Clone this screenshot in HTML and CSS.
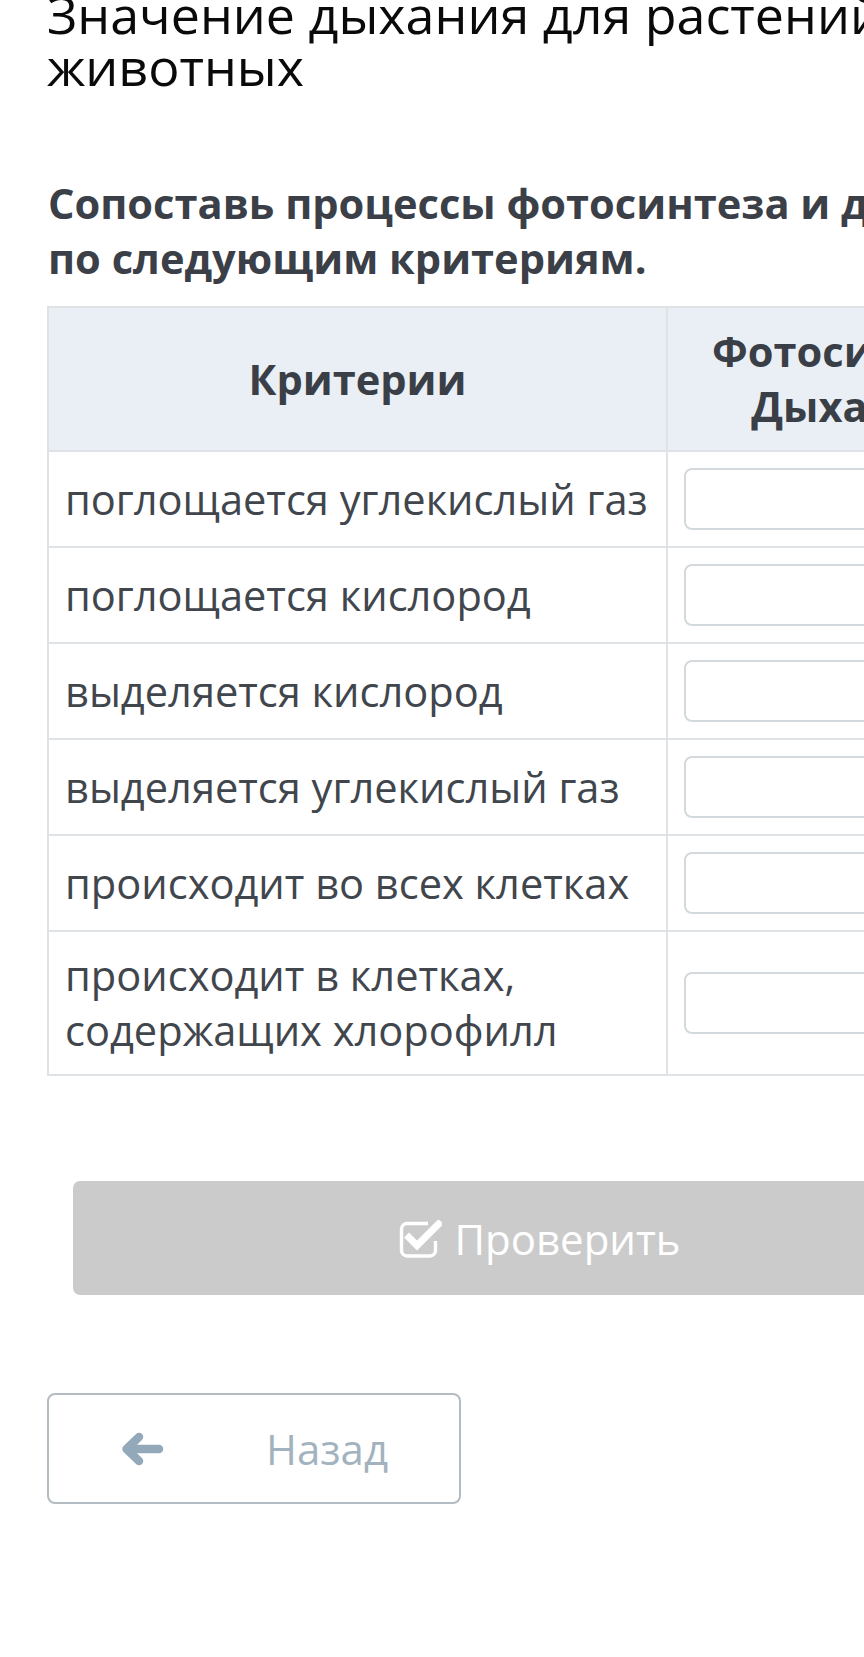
FILE: index.html
```html
<!DOCTYPE html>
<html lang="ru">
<head>
<meta charset="utf-8">
<title>Значение дыхания для растений и животных</title>
<link rel="stylesheet" href="styles.css">
</head>
<body>
<div class="page">
  <h1 class="title">Значение дыхания для растений и животных</h1>
  <h2 class="task">Сопоставь процессы фотосинтеза и дыхания<br>по следующим критериям.</h2>
  <table class="match">
    <colgroup><col class="c1"><col class="c2"></colgroup>
    <thead>
      <tr><th>Критерии</th><th>Фотосинтез/ Дыхание</th></tr>
    </thead>
    <tbody>
      <tr><td>поглощается углекислый газ</td><td><div class="select"></div></td></tr>
      <tr><td>поглощается кислород</td><td><div class="select"></div></td></tr>
      <tr><td>выделяется кислород</td><td><div class="select"></div></td></tr>
      <tr><td>выделяется углекислый газ</td><td><div class="select"></div></td></tr>
      <tr><td>происходит во всех клетках</td><td><div class="select"></div></td></tr>
      <tr><td>происходит в клетках, содержащих хлорофилл</td><td><div class="select"></div></td></tr>
    </tbody>
  </table>
  <div class="check-wrap">
    <button class="check-btn" type="button">
      <svg class="check-icon" viewBox="0 0 43 38" width="43" height="38">
        <path d="M29 3.5 H8 a5.5 5.5 0 0 0 -5.5 5.5 V30.5 a5.5 5.5 0 0 0 5.5 5.5 H31 a5.5 5.5 0 0 0 5.5 -5.5 V21" fill="none" stroke="#fff" stroke-width="3.4"/>
        <polyline points="10,17.5 18,25.5 39.5,4" fill="none" stroke="#fff" stroke-width="7" stroke-linejoin="miter" stroke-linecap="square"/>
      </svg>
      <span>Проверить</span>
    </button>
  </div>
  <button class="back-btn" type="button">
    <svg class="back-icon" viewBox="0 0 44 36" width="44" height="36">
      <path d="M39 18 H8 M19 6 L6.5 18 L19 30" fill="none" stroke="#93a8b8" stroke-width="8.5" stroke-linecap="round" stroke-linejoin="round"/>
    </svg>
    <span>Назад</span>
  </button>
</div>
</body>
</html>
```

FILE: styles.css
```css
html, body {
  margin: 0;
  padding: 0;
  overflow: hidden;
  background: #ffffff;
}

.page {
  width: 986px;
  padding: 0 47px 160px 47px;
  font-family: "Open Sans", "Noto Sans", sans-serif;
  color: #41464d;
}

.title {
  margin: -12px 0 0 0;
  font-size: 52px;
  line-height: 52px;
  font-weight: 400;
  color: #0a0a0a;
}

.task {
  margin: 84px 0 20px 1px;
  font-size: 41.6px;
  line-height: 55px;
  font-weight: 700;
  color: #3b4048;
  white-space: nowrap;
}

.match {
  width: 986px;
  border-collapse: collapse;
  table-layout: fixed;
}

.match .c1 { width: 619px; }
.match .c2 { width: 367px; }

.match th,
.match td {
  border: 2px solid #dfe3e6;
  padding: 16px;
  font-size: 41.6px;
  line-height: 55px;
  vertical-align: middle;
}

.match th {
  background: #e9eff4;
  font-weight: 700;
  color: #3a3f47;
  text-align: center;
}

.match td {
  font-weight: 400;
  color: #41464d;
  text-align: left;
}

.select {
  height: 58px;
  border: 2px solid #d3d9dc;
  border-radius: 8px;
  background: #ffffff;
}

.check-wrap {
  margin: 105px 26px 0 26px;
}

.check-btn {
  width: 100%;
  height: 114px;
  border: none;
  border-radius: 7px;
  background: #cbcbcb;
  color: #ffffff;
  font-family: "Open Sans", "Noto Sans", sans-serif;
  font-size: 42px;
  line-height: 55px;
  display: flex;
  align-items: center;
  justify-content: center;
  gap: 12px;
  padding: 0;
}

.check-icon {
  display: block;
  margin-top: 1px;
}

.back-btn {
  margin-top: 98px;
  width: 414px;
  height: 111px;
  border: 2px solid #b3bcc2;
  border-radius: 8px;
  background: #ffffff;
  color: #a2b3bf;
  font-family: "Open Sans", "Noto Sans", sans-serif;
  font-size: 42px;
  line-height: 55px;
  display: flex;
  align-items: center;
  padding: 0 0 0 71px;
  gap: 102px;
}

.back-icon {
  display: block;
}
```
